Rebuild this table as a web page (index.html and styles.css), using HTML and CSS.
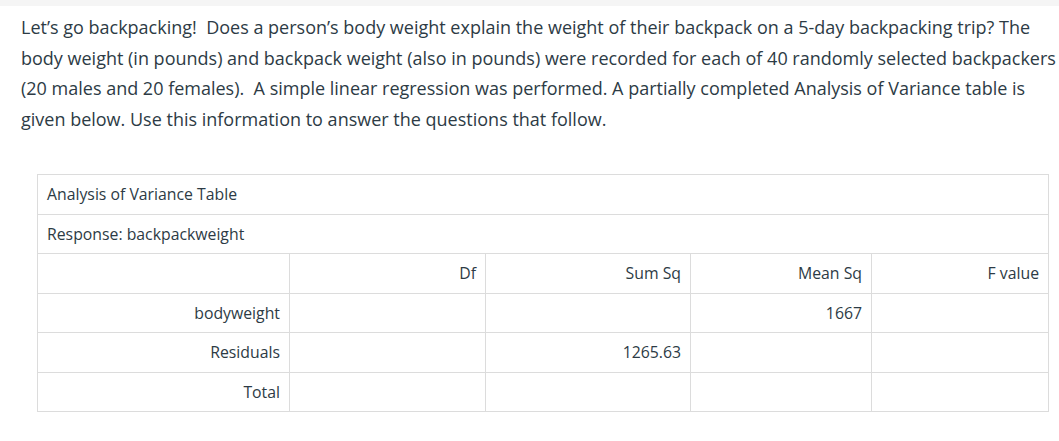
FILE: index.html
```html
<!DOCTYPE html>
<html lang="en">
<head>
<meta charset="utf-8">
<title>Analysis of Variance</title>
<link rel="stylesheet" href="styles.css">
</head>
<body>
<div class="topbar"></div>
<main class="content">
  <p class="intro">Let’s go backpacking!&nbsp; Does a person’s body weight explain the weight of their backpack on a 5-day backpacking trip? The body weight (in pounds) and backpack weight (also in pounds) were recorded for each of 40 randomly selected backpackers (20 males and 20 females).&nbsp; A simple linear regression was performed. A partially completed Analysis of Variance table is given below. Use this information to answer the questions that follow.</p>
  <table class="anova">
    <colgroup>
      <col class="c1"><col class="c2"><col class="c3"><col class="c4"><col class="c5">
    </colgroup>
    <tbody>
      <tr><td colspan="5" class="left">Analysis of Variance Table</td></tr>
      <tr><td colspan="5" class="left">Response: backpackweight</td></tr>
      <tr><td></td><td>Df</td><td>Sum Sq</td><td>Mean Sq</td><td>F value</td></tr>
      <tr><td>bodyweight</td><td></td><td></td><td>1667</td><td></td></tr>
      <tr><td>Residuals</td><td></td><td>1265.63</td><td></td><td></td></tr>
      <tr><td>Total</td><td></td><td></td><td></td><td></td></tr>
    </tbody>
  </table>
</main>
</body>
</html>
```

FILE: styles.css
```css
html, body {
  margin: 0;
  padding: 0;
  background: #ffffff;
}

body {
  font-family: "Open Sans", "Liberation Sans", sans-serif;
  color: #2d3b45;
}

.topbar {
  height: 6px;
  background: #f5f5f5;
}

.content {
  padding: 6px 0 0 21px;
}

.intro {
  margin: 0;
  font-size: 18px;
  line-height: 30.5px;
}

.anova {
  margin: 40px 0 0 16px;
  border-collapse: collapse;
  width: 1011px;
  table-layout: fixed;
  font-size: 15.8px;
}

.c1 { width: 252px; }
.c2 { width: 196px; }
.c3 { width: 205px; }
.c4 { width: 181px; }
.c5 { width: 177px; }

.anova td {
  border: 1px solid #dcdcdc;
  padding: 9px 9px;
  line-height: 20.5px;
  height: 20.5px;
  text-align: right;
  vertical-align: middle;
}

.anova td.left {
  text-align: left;
}
```
